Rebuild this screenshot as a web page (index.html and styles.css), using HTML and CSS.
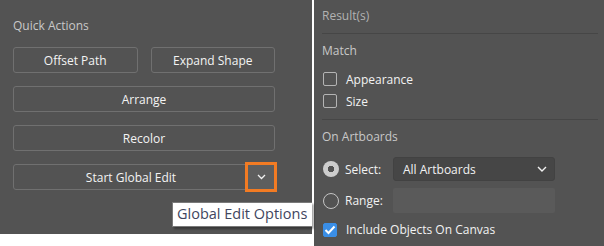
FILE: index.html
```html
<!DOCTYPE html>
<html lang="en">
<head>
    <meta charset="UTF-8">
    <meta name="viewport" content="width=device-width, initial-scale=1.0">
    <title>Global Edit</title>
    <link rel="stylesheet" href="styles.css">
</head>
<body>

<!-- Properties panel: quick actions -->
<section class="panel quick">
    <h3 class="label">Quick Actions</h3>
    <div class="actions">
        <button class="btn">Offset Path</button>
        <button class="btn">Expand Shape</button>
        <button class="btn wide">Arrange</button>
        <button class="btn wide">Recolor</button>
        <div class="btn wide split">
            <span class="split-text">Start Global Edit</span>
            <span class="more">
                <svg width="9" height="6" viewBox="0 0 9 6"><polyline points="1,1 4.5,4.5 8,1" fill="none" stroke="#f2f2f2" stroke-width="1.3"/></svg>
            </span>
        </div>
    </div>
    <div class="tooltip">Global Edit Options</div>
</section>

<!-- Global edit options flyout -->
<section class="panel options">
    <h3 class="label dim">Result(s)</h3>
    <hr class="divider">

    <h3 class="label match-title">Match</h3>
    <label class="check-row first">
        <span class="box"></span>Appearance
    </label>
    <label class="check-row">
        <span class="box"></span>Size
    </label>
    <hr class="divider low">

    <h3 class="label board-title">On Artboards</h3>
    <div class="radio-row select-row">
        <span class="radio on"></span>
        <span class="radio-label">Select:</span>
        <div class="dropdown">
            <span>All Artboards</span>
            <svg width="10" height="6" viewBox="0 0 10 6"><polyline points="1,1 5,5 9,1" fill="none" stroke="#f2f2f2" stroke-width="1.4"/></svg>
        </div>
    </div>
    <div class="radio-row range-row">
        <span class="radio"></span>
        <span class="radio-label">Range:</span>
        <div class="field"></div>
    </div>
    <label class="check-row canvas-row">
        <span class="box checked">
            <svg width="12" height="10" viewBox="0 0 12 10"><polyline points="1.5,5 4.5,8 10.5,1.5" fill="none" stroke="#fff" stroke-width="2"/></svg>
        </span>Include Objects On Canvas
    </label>
</section>

</body>
</html>
```

FILE: styles.css
```css
body {
    margin: 0;
    padding: 0;
    background-color: #ffffff;
    font-family: "Open Sans", "Noto Sans", sans-serif;
    font-size: 12px;
    color: #f2f2f2;
    display: flex;
    align-items: flex-start;
    gap: 2px;
}

.panel {
    background-color: #535353;
    box-sizing: border-box;
}

.quick {
    position: relative;
    width: 312px;
    height: 234px;
    padding: 18px 37px 0 13px;
}

.options {
    flex: 1;
    height: 246px;
    padding: 8px 6px 0 8px;
    display: flex;
    flex-direction: column;
}

.label {
    margin: 0;
    font-size: 12px;
    font-weight: normal;
    line-height: 16px;
    color: #c8c8c8;
}

.label.dim {
    color: #b2b2b2;
}

/* quick action buttons */
.actions {
    margin-top: 13px;
    display: grid;
    grid-template-columns: 1fr 1fr;
    column-gap: 13px;
    row-gap: 13px;
}

.btn {
    height: 26px;
    box-sizing: border-box;
    border: 1px solid #707070;
    border-radius: 3px;
    background-color: #535353;
    color: #f4f4f4;
    font-family: inherit;
    font-size: 12px;
    padding: 0;
    display: flex;
    align-items: center;
    justify-content: center;
}

.btn.wide {
    grid-column: 1 / 3;
}

.split {
    justify-content: space-between;
}

.split-text {
    flex: 1;
    text-align: center;
}

.more {
    width: 26px;
    height: 24px;
    background-color: #5e5e5e;
    outline: 3px solid #f27b23;
    display: flex;
    align-items: center;
    justify-content: center;
}

.tooltip {
    position: absolute;
    left: 172px;
    top: 202px;
    width: 140px;
    height: 25px;
    box-sizing: border-box;
    padding-left: 4px;
    background-color: #ffffff;
    border: 1px solid #7a7a7a;
    border-right: none;
    box-shadow: 2px 2px 2px rgba(0, 0, 0, 0.35);
    color: #3f4660;
    font-size: 14.5px;
    line-height: 22px;
    white-space: nowrap;
    overflow: hidden;
}

/* flyout */
.divider {
    margin: 9px 0 0 0;
    border: none;
    border-top: 1px solid #464646;
    height: 0;
}

.divider.low {
    margin-top: 7px;
}

.match-title,
.board-title {
    margin-top: 9px;
}

.check-row {
    height: 22px;
    display: flex;
    align-items: center;
    gap: 9px;
    padding-left: 1px;
}

.check-row.first {
    margin-top: 9px;
}

.box {
    width: 14px;
    height: 14px;
    box-sizing: border-box;
    border: 1px solid #b4b4b4;
    border-radius: 2px;
    display: flex;
    align-items: center;
    justify-content: center;
}

.box.checked {
    background-color: #3a8ee6;
    border-color: #3a8ee6;
}

.canvas-row {
    margin-top: 6px;
    height: 21px;
}

.radio-row {
    display: flex;
    align-items: center;
    gap: 6px;
}

.select-row {
    margin-top: 12px;
    height: 24px;
}

.range-row {
    margin-top: 7px;
    height: 25px;
}

.radio {
    width: 16px;
    height: 16px;
    box-sizing: border-box;
    border: 1.5px solid #c4c4c4;
    border-radius: 50%;
    margin-left: 1px;
}

.radio.on {
    border: none;
    background: radial-gradient(circle, #535353 0 3px, #cdcdcd 3.5px);
}

.radio-label {
    width: 42px;
}

.dropdown {
    width: 162px;
    height: 24px;
    box-sizing: border-box;
    background-color: #464646;
    border: 1px solid #424242;
    border-radius: 3px;
    padding: 0 7px 0 9px;
    display: flex;
    align-items: center;
    justify-content: space-between;
}

.field {
    width: 162px;
    height: 25px;
    background-color: #5a5a5a;
    border-radius: 2px;
}
```
